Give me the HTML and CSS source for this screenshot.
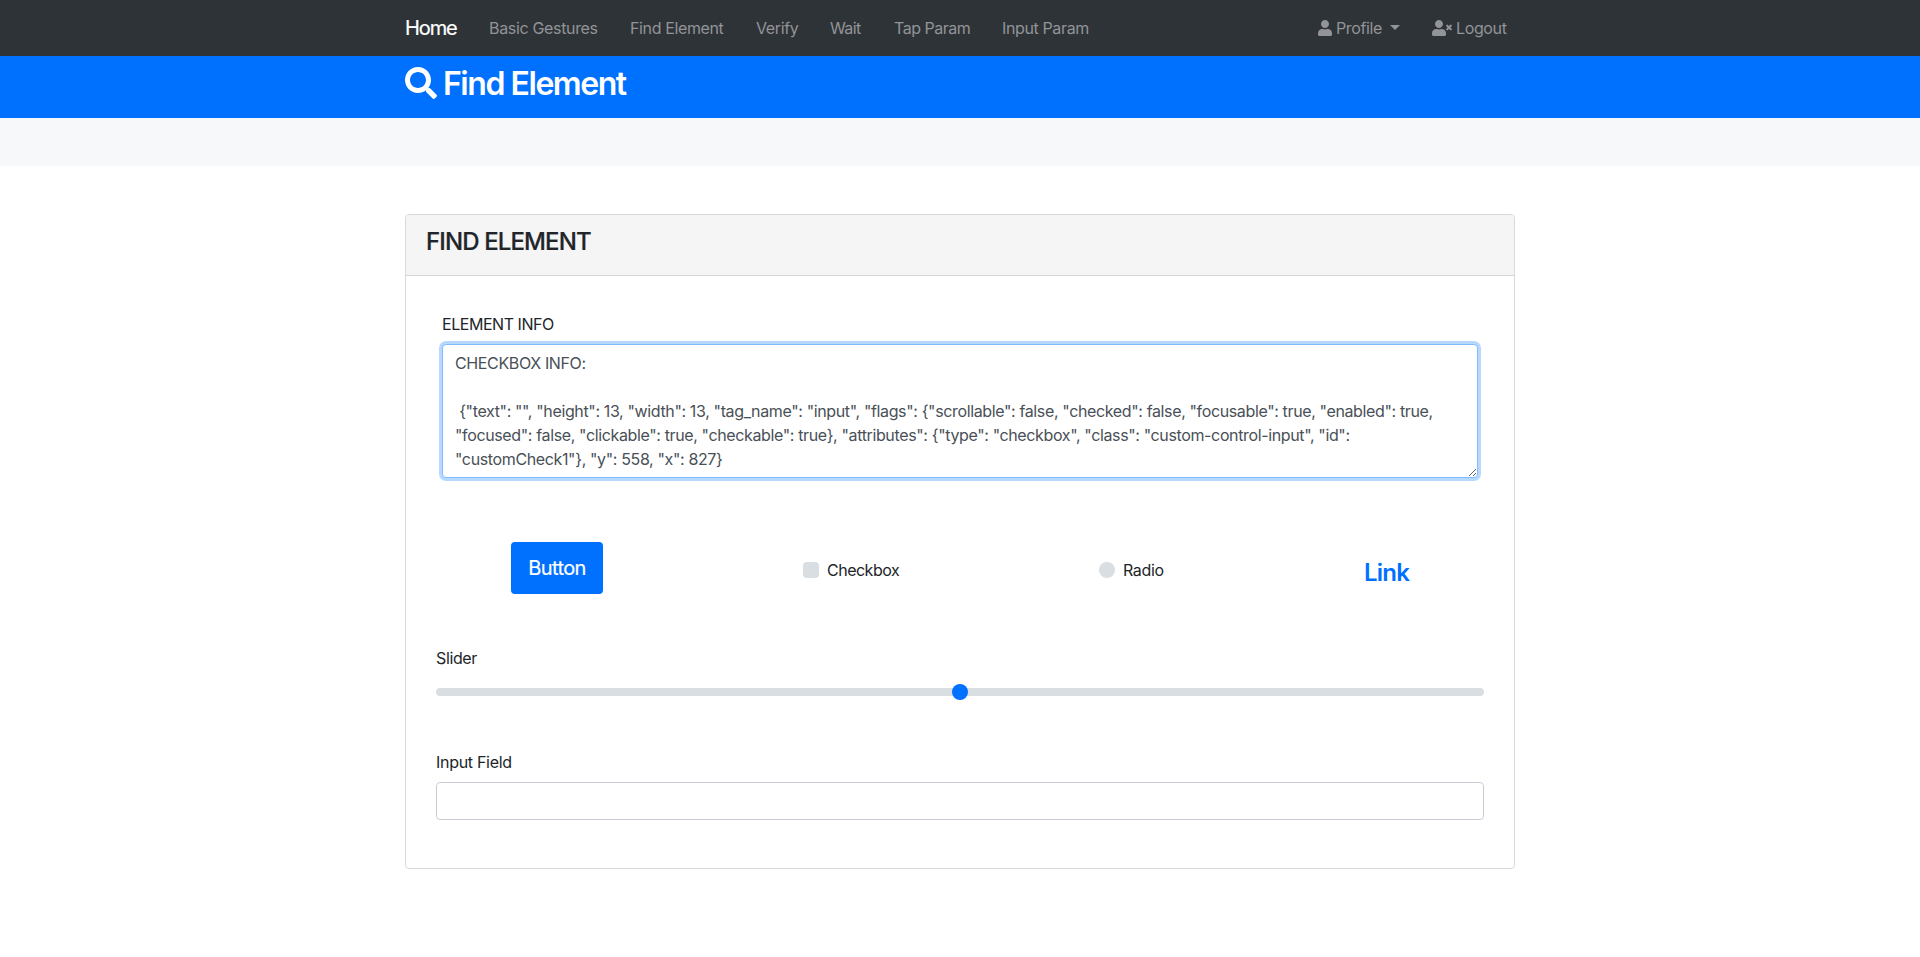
FILE: index.html
```
<!DOCTYPE html>
<html lang="en">
<head>
<meta charset="utf-8">
<title>Find Element</title>
<link rel="stylesheet" href="styles.css">
</head>
<body>
<nav class="navbar">
  <div class="container nav-row">
    <a class="brand">Home</a>
    <a class="nav-link gestures">Basic Gestures</a>
    <a class="nav-link find">Find Element</a>
    <a class="nav-link verify">Verify</a>
    <a class="nav-link wait">Wait</a>
    <a class="nav-link tap">Tap Param</a>
    <a class="nav-link input-param">Input Param</a>
    <div class="nav-right">
      <a class="nav-link profile"><svg class="icon-user" viewBox="0 0 448 512"><path d="M224 256c70.700 0 128-57.300 128-128S294.700 0 224 0 96 57.300 96 128s57.300 128 128 128zm89.600 32h-16.700c-22.200 10.200-46.900 16-72.900 16s-50.600-5.800-72.900-16h-16.700C60.200 288 0 348.200 0 422.400V464c0 26.500 21.500 48 48 48h352c26.500 0 48-21.500 48-48v-41.600c0-74.200-60.200-134.400-134.400-134.400z"/></svg><span>Profile</span><i class="caret"></i></a>
      <a class="nav-link logout"><svg class="icon-logout" viewBox="0 0 640 512"><path d="M589.600 240l45.600-45.600c6.300-6.300 6.300-16.500 0-22.800l-22.800-22.800c-6.300-6.300-16.500-6.300-22.800 0L544 194.400l-45.600-45.600c-6.300-6.300-16.500-6.300-22.800 0l-22.800 22.800c-6.300 6.300-6.300 16.500 0 22.800l45.600 45.600-45.600 45.600c-6.300 6.300-6.300 16.500 0 22.800l22.800 22.800c6.300 6.300 16.500 6.300 22.800 0l45.600-45.600 45.600 45.600c6.300 6.300 16.500 6.300 22.800 0l22.800-22.800c6.300-6.300 6.300-16.500 0-22.800L589.600 240zM224 256c70.700 0 128-57.300 128-128S294.700 0 224 0 96 57.300 96 128s57.300 128 128 128zm89.600 32h-16.700c-22.200 10.200-46.900 16-72.900 16s-50.600-5.800-72.900-16h-16.700C60.200 288 0 348.200 0 422.400V464c0 26.500 21.500 48 48 48h352c26.500 0 48-21.500 48-48v-41.600c0-74.200-60.200-134.400-134.400-134.400z"/></svg><span>Logout</span></a>
    </div>
  </div>
</nav>
<header class="banner">
  <div class="container banner-row">
    <svg class="icon-search" viewBox="0 0 512 512"><path d="M505 442.700L405.300 343c-4.500-4.500-10.600-7-17-7H372c27.600-35.300 44-79.700 44-128C416 93.100 322.900 0 208 0S0 93.100 0 208s93.100 208 208 208c48.300 0 92.700-16.400 128-44v16.300c0 6.400 2.500 12.500 7 17l99.700 99.700c9.400 9.400 24.600 9.400 33.900 0l28.300-28.300c9.400-9.400 9.400-24.600.1-34zM208 336c-70.700 0-128-57.200-128-128 0-70.700 57.200-128 128-128 70.700 0 128 57.200 128 128 0 70.700-57.200 128-128 128z"/></svg>
    <h1 class="title">Find Element</h1>
  </div>
</header>
<section class="strip"></section>
<main class="container">
  <div class="card">
    <div class="card-header"><h4 class="card-title">FIND ELEMENT</h4></div>
    <div class="card-body">
      <div class="info-group">
        <label class="info-label" for="info">ELEMENT INFO</label>
        <textarea class="info" id="info" rows="5">CHECKBOX INFO:

 {"text": "", "height": 13, "width": 13, "tag_name": "input", "flags": {"scrollable": false, "checked": false, "focusable": true, "enabled": true,
"focused": false, "clickable": true, "checkable": true}, "attributes": {"type": "checkbox", "class": "custom-control-input", "id":
"customCheck1"}, "y": 558, "x": 827}</textarea>
      </div>
      <div class="controls">
        <button class="btn" type="button">Button</button>
        <label class="choice check"><i class="box"></i><span class="checkbox-text">Checkbox</span></label>
        <label class="choice radio"><i class="box round"></i><span class="radio-text">Radio</span></label>
        <a class="link">Link</a>
      </div>
      <label class="slider-label" for="slider">Slider</label>
      <input class="slider" id="slider" type="range">
      <label class="field-label" for="field">Input Field</label>
      <input class="field" id="field" type="text">
    </div>
  </div>
</main>
</body>
</html>
```
FILE: styles.css
```
* { box-sizing: border-box; }
body {
  margin: 0;
  background: #fff;
  color: #212529;
  font: 400 16px/24px Inter, "Liberation Sans", sans-serif;
  letter-spacing: -0.37px;
}
svg { fill: currentColor; flex: none; display: block; }
.container { width: 1110px; margin: 0 auto; }
.navbar { height: 56px; background: #2e3338; }
.nav-row { height: 56px; display: flex; align-items: center; white-space: nowrap; }
.brand { width: 84px; font-size: 20px; line-height: 30px; color: #fff; letter-spacing: -1.1px; -webkit-text-stroke: 0.2px; }
.nav-link { flex: none; color: #929497; }
.gestures { width: 141px; letter-spacing: -0.33px; }
.find { width: 126px; }
.verify { width: 74px; }
.wait { width: 64px; letter-spacing: -0.6px; }
.tap { width: 108px; letter-spacing: -0.5px; }
.nav-right { display: flex; margin-left: auto; padding-right: 8px; gap: 32px; }
.profile, .logout { display: flex; align-items: center; }
.profile { width: 82px; }
.logout { width: 75px; }
.icon-user { width: 14px; height: 16px; margin-right: 4px; }
.icon-logout { width: 20px; height: 16px; margin-right: 4px; }
.caret { margin: -2px 0 0 auto; border: 5px solid transparent; border-top-color: currentColor; border-bottom: 0; }
.banner { height: 62px; background: #0070ff; color: #fff; }
.banner-row { display: flex; padding-top: 8px; }
.icon-search { width: 32px; height: 32px; margin: 3px 6px 0 0; }
.title { margin: 1px 0 0; font-size: 32px; line-height: 38px; font-weight: 600; letter-spacing: -1.45px; }
.strip { height: 48px; background: #f7f8fa; margin-bottom: 48px; }
.card { height: 655px; border: 1px solid #d9d9d9; border-radius: 4px; overflow: hidden; }
.card-header { height: 61px; padding: 12px 20px; background: #f5f5f5; border-bottom: 1px solid #d5d5d6; }
.card-title { margin: 0; font-size: 24px; line-height: 29px; font-weight: 500; letter-spacing: -0.88px; -webkit-text-stroke: 0.2px; }
.card-body { padding: 36px 30px 0; display: flex; flex-direction: column; }
.info-group { padding: 0 6px; display: flex; flex-direction: column; }
.info-label { margin-bottom: 8px; letter-spacing: -0.46px; }
.info {
  height: 134px; margin: 0; padding: 6px 12px; overflow: hidden;
  border: 1px solid #80bdff; border-radius: 4px; outline: 0;
  box-shadow: 0 0 0 3px #b8d9ff;
  background: #fff; color: #495057; font: inherit; letter-spacing: -0.366px;
}
.controls { height: 52px; margin: 64px 0 52px; padding-left: 75px; display: flex; align-items: flex-start; }
.btn { width: 92px; height: 52px; border: 0; border-radius: 4px; background: #0070ff; color: #fff; font: inherit; font-size: 20px; letter-spacing: -0.6px; padding: 0; -webkit-text-stroke: 0.2px; }
.choice { display: flex; align-items: center; gap: 8px; margin-top: 16px; }
.check { margin-left: 200px; width: 296px; letter-spacing: -0.5px; }
.radio { width: 265px; }
.box { width: 16px; height: 16px; border-radius: 4px; background: #d9dee2; }
.round { border-radius: 50%; }
.link { margin-top: 16px; font-size: 24px; line-height: 29px; font-weight: 600; color: #0070ff; letter-spacing: -0.8px; }
.slider-label { margin-bottom: 10px; }
.slider { appearance: none; width: 100%; height: 24px; margin: 0 0 46px; background: transparent; }
.slider::-webkit-slider-runnable-track { height: 8px; border-radius: 8px; background: #d9dee2; }
.slider::-webkit-slider-thumb { appearance: none; width: 16px; height: 16px; margin-top: -4px; border-radius: 50%; background: #0070ff; }
.field-label { margin-bottom: 8px; letter-spacing: -0.3px; }
.field { width: 100%; height: 38px; border: 1px solid #c7ccd4; border-radius: 4px; background: #fff; padding: 6px 12px; }
```
